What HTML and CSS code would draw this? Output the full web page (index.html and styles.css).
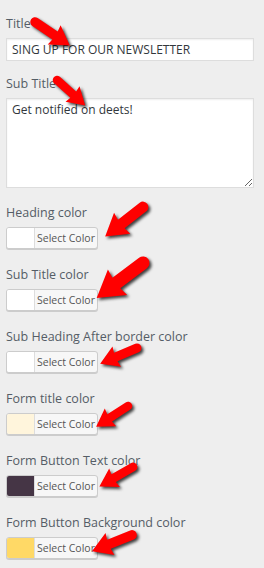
FILE: index.html
```html
<!DOCTYPE html>
<html lang="en">

<head>
    <meta charset="UTF-8">
    <meta name="viewport" content="width=device-width, initial-scale=1.0">
    <title>Newsletter Settings</title>
    <link rel="stylesheet" href="styles.css">
</head>

<body>

    <div class="panel">
        <div class="field">
            <label class="label">Title</label>
            <input class="text-input" type="text" value="SING UP FOR OUR NEWSLETTER">
        </div>

        <div class="field field-area">
            <label class="label">Sub Title</label>
            <textarea class="text-area">Get notified on deets!</textarea>
        </div>

        <div class="field color-field">
            <label class="label">Heading color</label>
            <button class="color-btn"><span class="swatch swatch-white"></span><span class="pick">Select Color</span></button>
        </div>

        <div class="field color-field">
            <label class="label">Sub Title color</label>
            <button class="color-btn"><span class="swatch swatch-white"></span><span class="pick">Select Color</span></button>
        </div>

        <div class="field color-field">
            <label class="label">Sub Heading After border color</label>
            <button class="color-btn"><span class="swatch swatch-white"></span><span class="pick">Select Color</span></button>
        </div>

        <div class="field color-field">
            <label class="label">Form title color</label>
            <button class="color-btn"><span class="swatch swatch-cream"></span><span class="pick">Select Color</span></button>
        </div>

        <div class="field color-field">
            <label class="label">Form Button Text color</label>
            <button class="color-btn"><span class="swatch swatch-plum"></span><span class="pick">Select Color</span></button>
        </div>

        <div class="field color-field">
            <label class="label">Form Button Background color</label>
            <button class="color-btn"><span class="swatch swatch-yellow"></span><span class="pick">Select Color</span></button>
        </div>
    </div>

    <!-- red pointer arrows drawn over the form -->
    <svg class="arrows" width="264" height="568" viewBox="0 0 264 568">
        <defs>
            <path id="arrow40" d="M0,-4.5 L23,-4.5 L22,-11 L40,0 L22,11 L23,4.5 L0,4.5 A4.5,4.5 0 0 1 0,-4.5 Z" />
        </defs>
        <g transform="translate(35,22) rotate(34) scale(1.05)"><use href="#arrow40" /></g>
        <g transform="translate(57,80) rotate(42) scale(0.95)"><use href="#arrow40" /></g>
        <g transform="translate(143,207) rotate(142) scale(1.2)"><use href="#arrow40" /></g>
        <g transform="translate(143,263) rotate(143) scale(1.45)"><use href="#arrow40" /></g>
        <g transform="translate(137,348) rotate(157) scale(1.0)"><use href="#arrow40" /></g>
        <g transform="translate(128,406) rotate(147) scale(0.95)"><use href="#arrow40" /></g>
        <g transform="translate(133,467) rotate(150) scale(0.97)"><use href="#arrow40" /></g>
        <g transform="translate(132,535) rotate(158) scale(1.08)"><use href="#arrow40" /></g>
    </svg>

</body>

</html>
```

FILE: styles.css
```css
body {
    margin: 0;
    background: #eeeeee;
    font-family: 'Open Sans', 'Noto Sans', sans-serif;
    color: #555d66;
}

.panel {
    padding: 14px 10px 0 6px;
}

.field {
    display: flex;
    flex-direction: column;
    align-items: flex-start;
    margin-bottom: 13px;
}

.field-area {
    margin-bottom: 15px;
}

.color-field {
    margin-bottom: 16px;
}

.label {
    font-size: 12.5px;
    line-height: 20px;
    margin-bottom: 4px;
}

.text-input {
    width: 248px;
    height: 23px;
    box-sizing: border-box;
    padding: 0 5px;
    border: 1px solid #dddddd;
    background: #ffffff;
    box-shadow: inset 0 1px 2px rgba(0, 0, 0, 0.07);
    font-family: inherit;
    font-size: 12px;
    color: #32373c;
    outline: none;
}

.text-area {
    width: 248px;
    height: 90px;
    box-sizing: border-box;
    margin: 0;
    padding: 2px 5px;
    border: 1px solid #dddddd;
    background: #ffffff;
    box-shadow: inset 0 1px 2px rgba(0, 0, 0, 0.07);
    font-family: inherit;
    font-size: 12px;
    line-height: 18px;
    color: #32373c;
    outline: none;
}

.color-btn {
    display: flex;
    width: 92px;
    height: 22px;
    padding: 0;
    border: 1px solid #cccccc;
    border-radius: 3px;
    background: #f7f7f7;
    box-shadow: 0 1px 0 #cccccc;
    overflow: hidden;
    font-family: inherit;
    cursor: pointer;
}

.swatch {
    width: 27px;
    height: 100%;
    border-right: 1px solid #dddddd;
}

.swatch-white {
    background: #ffffff;
}

.swatch-cream {
    background: #fff5dc;
}

.swatch-plum {
    background: #453545;
}

.swatch-yellow {
    background: #ffd966;
}

.pick {
    flex: 1;
    font-size: 10.5px;
    line-height: 20px;
    color: #555555;
    text-align: center;
}

.arrows {
    position: absolute;
    top: 0;
    left: 0;
    pointer-events: none;
    fill: #ff0000;
    filter: drop-shadow(2px 2px 1.5px rgba(0, 0, 0, 0.75));
}
```
